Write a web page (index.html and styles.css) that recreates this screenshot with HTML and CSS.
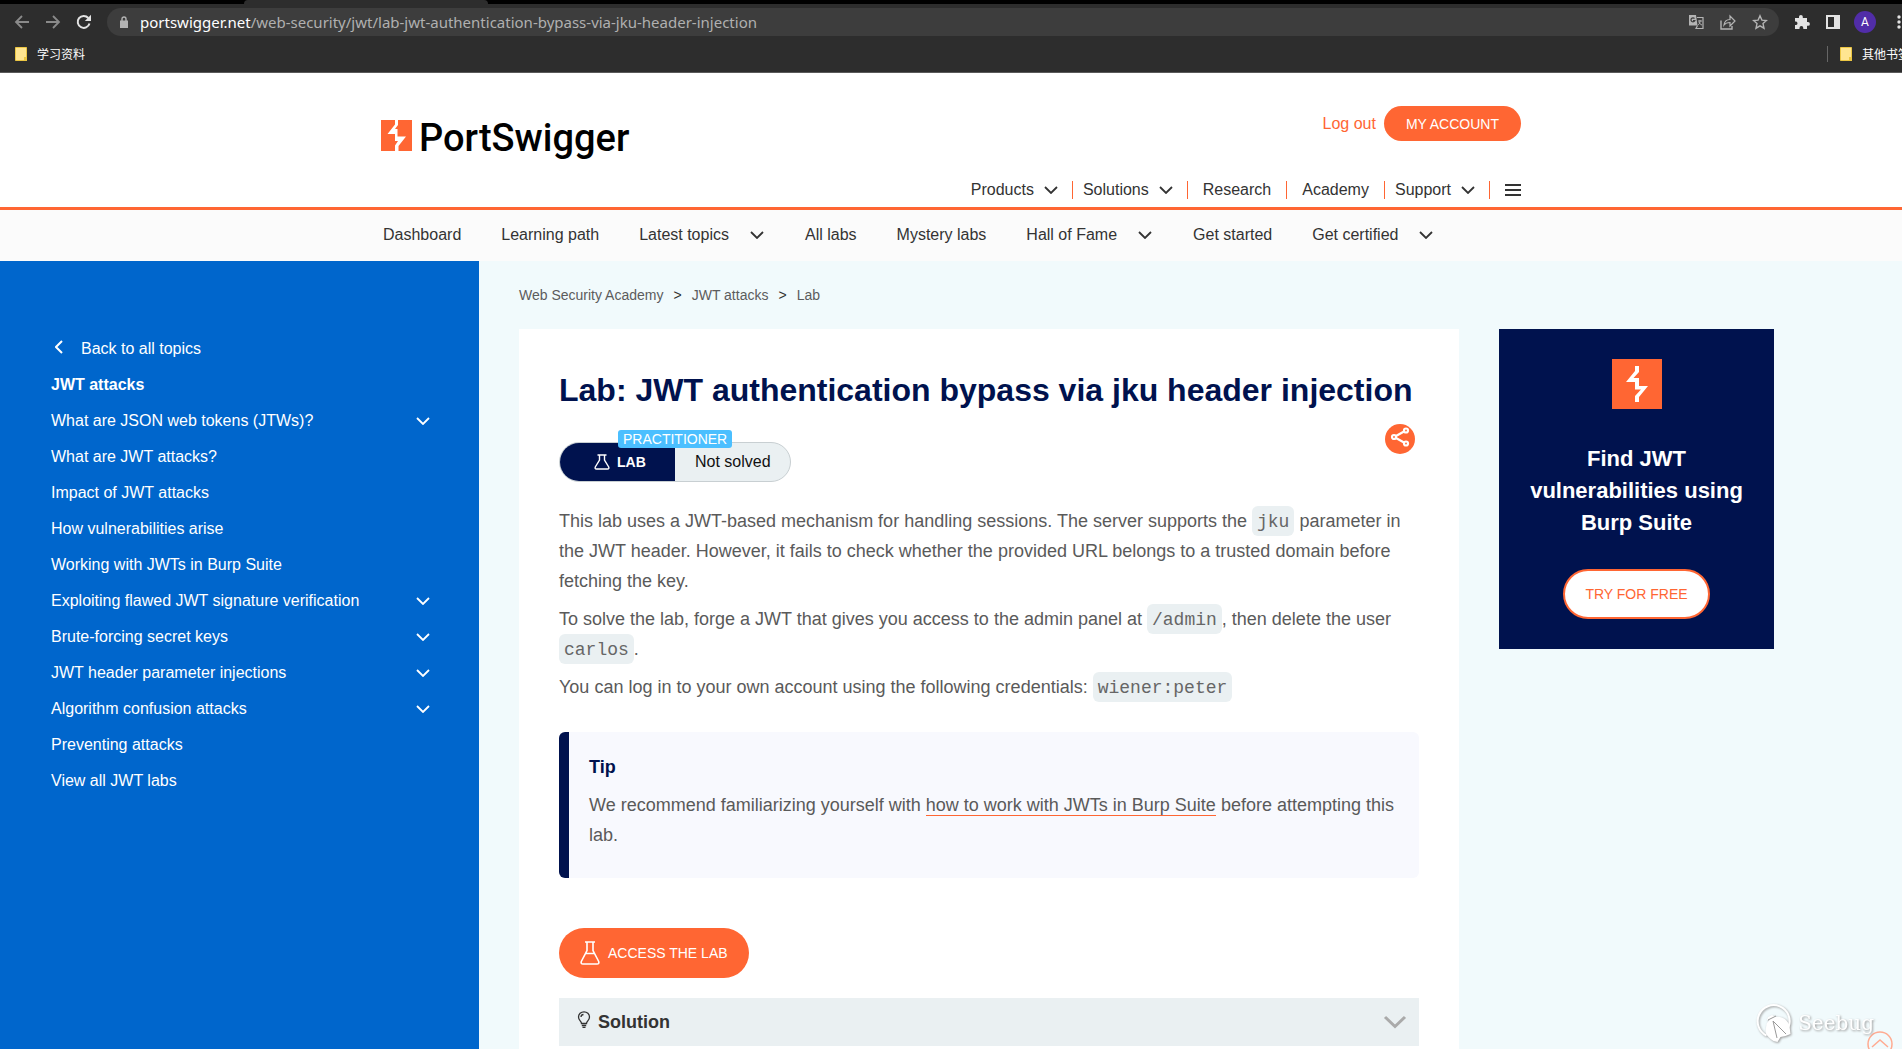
FILE: index.html
```html
<!DOCTYPE html>
<html lang="en">
<head>
<meta charset="utf-8">
<meta name="viewport" content="width=device-width, initial-scale=1">
<title>Lab: JWT authentication bypass via jku header injection</title>
<link rel="stylesheet" href="styles.css">
</head>
<body>
<svg class="sprite" aria-hidden="true">
  <symbol id="chevron" viewBox="0 0 14 8"><path d="M1 1l6 6 6-6" fill="none" stroke="currentColor" stroke-width="1.800"/></symbol>
  <symbol id="bolt" viewBox="0 0 50 50"><path fill="#ff6633" d="M0 0h50v50H0z"/><path fill="#fff" d="M23 7h4v6l-5.500 6H27v8h9L27 38v5h-4v-6l6-6.500h-6V23h-9l9-11z"/></symbol>
  <symbol id="folder" viewBox="0 0 12 14"><path d="M.5.5h11v13H.5z" fill="#ffe591" stroke="#ecc643"/><path d="M9 10h3v4H9z" fill="#ecc643"/></symbol>
  <symbol id="flask" viewBox="0 0 20 24"><path d="M5 1h10M7 1.500v8L1.300 20.500Q.500 23 3 23h14q2.500 0 1.700-2.500L13 9.500v-8M5.500 12.500h9" fill="none" stroke="currentColor" stroke-width="1.600"/></symbol>
</svg>

<header class="browser">
  <div class="tabs"><span class="tab"></span></div>
  <div class="toolbar">
    <button class="tool dim" aria-label="Back"><svg width="16" height="14" viewBox="0 0 16 14"><path d="M15 7H2M8 1L2 7l6 6" fill="none" stroke="currentColor" stroke-width="1.800"/></svg></button>
    <button class="tool dim" aria-label="Forward"><svg width="16" height="14" viewBox="0 0 16 14"><path d="M1 7h13M8 1l6 6-6 6" fill="none" stroke="currentColor" stroke-width="1.800"/></svg></button>
    <button class="tool" aria-label="Reload"><svg width="16" height="16" viewBox="0 0 16 16"><path d="M13.500 9.500A6 6 0 1 1 12.300 4" fill="none" stroke="currentColor" stroke-width="2"/><path d="M15 .800v6.200H8.800z" fill="currentColor"/></svg></button>
    <div class="omnibox">
      <svg class="lock" width="10" height="12" viewBox="0 0 10 12"><path d="M1 4.500h8V12H1z" fill="currentColor"/><path d="M3 5V3a2 2 0 0 1 4 0v2" fill="none" stroke="currentColor" stroke-width="1.400"/></svg>
      <span class="url"><b>portswigger.net</b>/web-security/jwt/lab-jwt-authentication-bypass-via-jku-header-injection</span>
      <button class="tool grey" aria-label="Translate"><svg width="16" height="16" viewBox="0 0 16 16"><path d="M1 1h7l1.500 10.500H1z" fill="currentColor"/><path d="M9 3.500h6v11H8l1.500-3" fill="none" stroke="currentColor" stroke-width="1.200"/><path d="M6.500 4.500a2 2 0 1 0 .3 2.200H5" fill="none" stroke="#3d3d3d" stroke-width="1.200"/><path d="M10 7h4M12 6v1c0 2-1 3.500-2 4m1-3c.5 1.500 1.500 2.500 3 3" fill="none" stroke="currentColor"/></svg></button>
      <button class="tool grey" aria-label="Share page"><svg width="16" height="16" viewBox="0 0 16 16"><path d="M1 6.500V15h11v-3" fill="none" stroke="currentColor" stroke-width="1.400"/><path d="M4 11c.5-4 3-5.500 6-5.500V2l5 5-5 5V8.500C7.500 8.500 5.500 9 4 11z" fill="none" stroke="currentColor" stroke-width="1.200"/></svg></button>
      <button class="tool grey" aria-label="Bookmark"><svg width="16" height="16" viewBox="0 0 16 16"><path d="M8 1.800l1.900 4.300 4.600.4-3.500 3.100 1 4.600L8 11.800l-4 2.400 1-4.600L1.500 6.500l4.600-.4z" fill="none" stroke="currentColor" stroke-width="1.400"/></svg></button>
    </div>
    <button class="tool" aria-label="Extensions"><svg width="16" height="16" viewBox="0 0 16 16"><path d="M1 4h4V2.800a1.900 1.900 0 0 1 3.800 0V4H13v4h1a1.900 1.900 0 0 1 0 3.800h-1V15H9.300v-1a1.900 1.900 0 0 0-3.800 0v1H1v-4h1.200a1.900 1.900 0 0 0 0-3.600H1z" fill="currentColor"/></svg></button>
    <button class="tool" aria-label="Side panel"><svg width="16" height="16" viewBox="0 0 16 16"><path d="M1 1h14v14H1zm2 2v10h6V3z" fill="currentColor" fill-rule="evenodd"/></svg></button>
    <button class="avatar" aria-label="Profile">A</button>
    <button class="tool menu" aria-label="Menu"><svg width="16" height="16" viewBox="0 0 16 16"><g fill="currentColor"><circle cx="8" cy="3" r="1.700"/><circle cx="8" cy="8" r="1.700"/><circle cx="8" cy="13" r="1.700"/></g></svg></button>
  </div>
  <div class="bookmarks" lang="zh">
    <a class="bookmark" href="#"><svg width="12" height="14"><use href="#folder"/></svg>学习资料</a>
    <a class="bookmark other" href="#"><svg width="12" height="14"><use href="#folder"/></svg>其他书签</a>
  </div>
</header>

<header class="site">
  <div class="wrap site-inner">
    <a class="logo" href="#"><svg width="31" height="31" viewBox="0 0 31 31"><path fill="#ff6633" d="M0 0h31v31H0z"/><path fill="#fff" d="M14 0h3v5l-3 4h2.500v7.500H25l-7.500 9.500V31h-3.500v-5.500l3-4.500h-3v-7H6.500L14 4.500z"/></svg><span>PortSwigger</span></a>
    <div class="site-right">
      <div class="account"><a class="logout" href="#">Log out</a><a class="pill account-btn" href="#">MY ACCOUNT</a></div>
      <nav class="mainnav">
        <button class="drop">Products<svg class="chev"><use href="#chevron"/></svg></button>
        <button class="drop">Solutions<svg class="chev"><use href="#chevron"/></svg></button>
        <a href="#">Research</a>
        <a href="#">Academy</a>
        <button class="drop">Support<svg class="chev"><use href="#chevron"/></svg></button>
        <button class="burger" aria-label="Menu"><svg width="16" height="12"><path d="M0 1h16M0 6h16M0 11h16" stroke="#333" stroke-width="2"/></svg></button>
      </nav>
    </div>
  </div>
</header>

<nav class="subnav">
  <div class="wrap subnav-inner">
    <a href="#">Dashboard</a>
    <a href="#">Learning path</a>
    <a href="#">Latest topics<svg class="chev"><use href="#chevron"/></svg></a>
    <a href="#">All labs</a>
    <a href="#">Mystery labs</a>
    <a href="#">Hall of Fame<svg class="chev"><use href="#chevron"/></svg></a>
    <a href="#">Get started</a>
    <a href="#">Get certified<svg class="chev"><use href="#chevron"/></svg></a>
  </div>
</nav>

<div class="page">
  <nav class="topics">
    <a class="back" href="#"><svg width="8" height="14" viewBox="0 0 8 14"><path d="M7 1L1 7l6 6" fill="none" stroke="currentColor" stroke-width="2"/></svg>Back to all topics</a>
    <a class="current" href="#">JWT attacks</a>
    <a href="#">What are JSON web tokens (JTWs)?<svg class="chev"><use href="#chevron"/></svg></a>
    <a href="#">What are JWT attacks?</a>
    <a href="#">Impact of JWT attacks</a>
    <a href="#">How vulnerabilities arise</a>
    <a href="#">Working with JWTs in Burp Suite</a>
    <a href="#">Exploiting flawed JWT signature verification<svg class="chev"><use href="#chevron"/></svg></a>
    <a href="#">Brute-forcing secret keys<svg class="chev"><use href="#chevron"/></svg></a>
    <a href="#">JWT header parameter injections<svg class="chev"><use href="#chevron"/></svg></a>
    <a href="#">Algorithm confusion attacks<svg class="chev"><use href="#chevron"/></svg></a>
    <a href="#">Preventing attacks</a>
    <a href="#">View all JWT labs</a>
  </nav>

  <div class="content">
    <nav class="crumbs"><a href="#">Web Security Academy</a><span>&gt;</span><a href="#">JWT attacks</a><span>&gt;</span><a href="#">Lab</a></nav>
    <div class="columns">
      <main class="article">
        <h1>Lab: JWT authentication bypass via jku header injection</h1>
        <div class="status-row">
          <div class="status">
            <span class="level">PRACTITIONER</span>
            <span class="kind"><svg width="16" height="16" viewBox="0 0 16 16"><path d="M3.500 1h9M5.500 1v5L1.300 13Q.500 15 2.500 15h11q2 0 1.200-2L10.500 6V1" fill="none" stroke="currentColor" stroke-width="1.400"/></svg>LAB</span>
            <span class="state">Not solved</span>
          </div>
          <button class="share" aria-label="Share"><svg width="20" height="20" viewBox="0 0 20 20"><g fill="none" stroke="#fff" stroke-width="2.200"><circle cx="4" cy="10" r="2"/><circle cx="16" cy="3.500" r="2"/><circle cx="16" cy="16.500" r="2"/><path d="M6 9l8-4.500M6 11l8 4.500"/></g></svg></button>
        </div>
        <p>This lab uses a JWT-based mechanism for handling sessions. The server supports the <code>jku</code> parameter in the JWT header. However, it fails to check whether the provided URL belongs to a trusted domain before fetching the key.</p>
        <p>To solve the lab, forge a JWT that gives you access to the admin panel at <code>/admin</code>, then delete the user <code>carlos</code>.</p>
        <p>You can log in to your own account using the following credentials: <code>wiener:peter</code></p>
        <aside class="tip">
          <h2>Tip</h2>
          <p>We recommend familiarizing yourself with <a href="#">how to work with JWTs in Burp Suite</a> before attempting this lab.</p>
        </aside>
        <a class="pill access" href="#"><svg width="20" height="24"><use href="#flask"/></svg>ACCESS THE LAB</a>
        <button class="solution"><svg class="bulb" width="14" height="18" viewBox="0 0 14 18"><g fill="none" stroke="currentColor" stroke-width="1.300"><path d="M4.500 12.500C4.500 10 1.500 9.500 1.500 6a5.500 5.200 0 0 1 11 0c0 3.500-3 4-3 6.500zM4.800 14.500h4.400M5.500 16.300h3"/><path d="M4 6a3 2.500 0 0 1 2.500-2.500"/></g></svg>Solution<svg class="open" width="24" height="14" viewBox="0 0 24 14"><path d="M2 2l10 9.500L22 2" fill="none" stroke="#aaa" stroke-width="3"/></svg></button>
      </main>
      <aside class="promo">
        <svg width="50" height="50"><use href="#bolt"/></svg>
        <h2>Find JWT vulnerabilities using Burp Suite</h2>
        <a class="pill try" href="#">TRY FOR FREE</a>
      </aside>
    </div>
  </div>
</div>

<a class="to-top" href="#" aria-label="Back to top"><svg width="26" height="26" viewBox="0 0 26 26"><circle cx="13" cy="13" r="12" fill="none" stroke="#ffab91" stroke-width="1.500"/><path d="M5 16l8-7 8 7" fill="none" stroke="#ffab91" stroke-width="1.500"/></svg></a>
<div class="watermark">
  <svg width="38" height="42" viewBox="0 0 38 42"><path d="M10.500 33.500A16 16 0 1 1 32.500 25" fill="none" stroke="#fff" stroke-width="2"/><path d="M11 18l1-3 4-2 4 2c6-1 12 3 13.500 9l1 8-5 2-5 1-3 5-4-1c-5-3-8-7-8-10l1-7c1-2 2-3 3-4z" fill="#fff"/><path d="M12 18l8-4M17 19l4 17M17 19l13 13" fill="none" stroke="#999"/></svg>
  <span>Seebug</span>
</div>
</body>
</html>
```
FILE: styles.css
```css
* { box-sizing: border-box; }

body {
  margin: 0;
  min-height: 100vh;
  display: flex;
  flex-direction: column;
  position: relative;
  overflow: hidden;
  background: #fff;
  color: #333;
  font: 16px/20px "Liberation Sans", Arial, sans-serif;
}

a { color: inherit; text-decoration: none; }
button { border: 0; padding: 0; background: none; color: inherit; font: inherit; cursor: pointer; }
h1, h2, p { margin: 0; }
svg { flex: none; display: block; }
.sprite { position: absolute; width: 0; height: 0; }
.chev { width: 14px; height: 8px; }
.wrap { width: 100%; max-width: 1140px; margin: 0 auto; }

/* Browser chrome */
.browser { background: #2d2d2d; border-bottom: 1px solid #5a5a5a; overflow: hidden; }
.tabs { height: 4px; background: #000; padding-left: 244px; }
.tab { display: block; width: 244px; height: 4px; background: #2d2d2d; border-radius: 4px 4px 0 0; }
.toolbar { display: flex; align-items: center; gap: 15px; padding: 4px 0 4px 14px; margin-right: -5px; }
.tool { color: #e3e3e3; }
.tool.dim { color: #8a8a8a; }
.tool.grey { color: #b4b4b4; }
.omnibox {
  flex: 1;
  min-width: 0;
  height: 28px;
  display: flex;
  align-items: center;
  gap: 16px;
  padding: 0 11px;
  background: #3d3d3d;
  border-radius: 14px;
  color: #b0b0b0;
  font: 15px/20px "Noto Sans", "Open Sans", sans-serif;
}
.lock { margin-left: 1px; color: #b4b4b4; }
.url { flex: 1; min-width: 0; white-space: nowrap; overflow: hidden; margin-left: -5px; }
.url b { font-weight: 400; color: #fff; }
.avatar {
  width: 22px;
  height: 22px;
  border-radius: 50%;
  background: #512da8;
  color: #fff;
  font: 12px/22px Roboto, sans-serif;
  margin-left: -2px;
}
.bookmarks {
  display: flex;
  justify-content: space-between;
  padding: 6px 0 10px 15px;
  margin-right: -8px;
  color: #fff;
  font: 12px/16px "Noto Sans CJK SC", sans-serif;
}
.bookmark { display: flex; align-items: center; gap: 10px; white-space: nowrap; }
.other { border-left: 1px solid #666; padding-left: 12px; }

/* Site header */
.site { border-bottom: 3px solid #f63; }
.site-inner { display: flex; justify-content: space-between; height: 134px; }
.logo { display: flex; align-items: baseline; gap: 7px; align-self: flex-start; margin-top: 47px; color: #000; font: 500 38px/32px Roboto, sans-serif; }
.site-right { display: flex; flex-direction: column; align-items: flex-end; justify-content: space-between; padding: 33px 0 8px; }
.account { display: flex; align-items: center; gap: 8px; }
.logout { color: #f63; }
.pill { display: inline-flex; align-items: center; justify-content: center; background: #f63; color: #fff; font-size: 14px; border-radius: 25px; }
.account-btn { height: 35px; padding: 0 22px; }
.mainnav { display: flex; align-items: center; }
.mainnav > * { display: flex; align-items: center; gap: 10px; height: 18px; padding: 0 15px; border-right: 1px solid #f63; }
.mainnav .drop { padding: 0 14px 0 10px; }
.mainnav .burger { padding-right: 0; border: 0; }
.subnav { background: #fbfbfb; }
.subnav-inner { display: flex; gap: 40px; padding: 15px 2px 16px; }
.subnav a { display: flex; align-items: center; gap: 21px; white-space: nowrap; }
.subnav .chev { margin-right: 1px; }

/* Page body */
.page { flex: 1; display: flex; background: #f1fafc; }
.topics { flex: none; width: 479px; padding: 70px 49px 40px 51px; background: #06c; color: #fff; }
.topics a { display: flex; align-items: center; justify-content: space-between; height: 36px; }
.topics .back { justify-content: flex-start; gap: 18px; padding-left: 4px; }
.topics .back svg { margin-bottom: 4px; }
.topics .current { font-weight: 700; }
.content { flex: 1; min-width: 0; padding: 24px 40px 0; display: flex; flex-direction: column; }
.crumbs { display: flex; gap: 10px; color: #5c5c5c; font-size: 14px; }
.crumbs span { color: #333; }
.columns { flex: 1; display: flex; align-items: flex-start; gap: 40px; margin-top: 24px; }

.article { flex: 0 1 940px; align-self: stretch; padding: 40px 40px 0; background: #fff; color: #5a5a5a; font-size: 18px; line-height: 30px; }
.article h1 { color: #00124e; font-size: 32px; line-height: 42px; }
.status-row { display: flex; justify-content: space-between; align-items: flex-start; padding: 13px 4px 24px 0; }
.status { position: relative; display: flex; height: 40px; margin-top: 18px; border: 1px solid #c8cfd2; border-radius: 20px; background: #eaf0f2; font-size: 16px; line-height: 38px; color: #111; }
.level { position: absolute; top: -13px; left: 58px; padding: 0 5px; border-radius: 3px; background: #4bbfff; color: #fff; font-size: 14px; line-height: 18px; }
.kind { display: flex; align-items: center; gap: 7px; width: 115px; padding-left: 34px; border-radius: 20px 0 0 20px; background: #00124e; color: #fff; font-size: 14px; font-weight: 700; }
.state { padding: 0 19px 0 20px; }
.share { display: flex; justify-content: center; width: 30px; height: 30px; padding-top: 3px; border-radius: 50%; background: #f63; }
.article p { margin-bottom: 8px; }
code { display: inline-block; padding: 2px 5px 0; border-radius: 6px; background: #eaf0f2; color: #666; font: 18px/28px "Liberation Mono", "Courier New", monospace; vertical-align: top; }
.tip { margin-top: 30px; padding: 20px; border-left: 10px solid #00124e; border-radius: 6px; background: #f8f9fe; }
.tip h2 { margin-bottom: 8px; color: #00124e; font-size: 18px; line-height: 30px; }
.tip a { border-bottom: 1px solid #f63; }
.access { height: 50px; gap: 8px; margin-top: 50px; padding: 0 21px; }
.solution { display: flex; align-items: center; gap: 7px; width: 100%; height: 48px; margin-top: 20px; padding: 0 12px 0 18px; background: #eaf0f2; color: #333; font-weight: 700; }
.bulb { margin-bottom: 4px; }
.open { margin-left: auto; }

.promo { flex: 0 1 275px; padding: 30px; background: #00124e; color: #fff; text-align: center; }
.promo svg { margin: 0 auto; }
.promo h2 { margin: 34px 0 30px; font-size: 22px; line-height: 32px; }
.try { height: 50px; padding: 0 20px; border: 2px solid #f63; background: #fff; color: #f63; }

/* Floating overlays */
.to-top { position: absolute; right: 9px; bottom: -8px; }
.watermark { position: absolute; right: 28px; bottom: 5px; display: flex; align-items: center; gap: 4px; color: #fff; font: 20px/32px "DejaVu Serif", serif; filter: drop-shadow(1px 1px 1px #999); }
```
